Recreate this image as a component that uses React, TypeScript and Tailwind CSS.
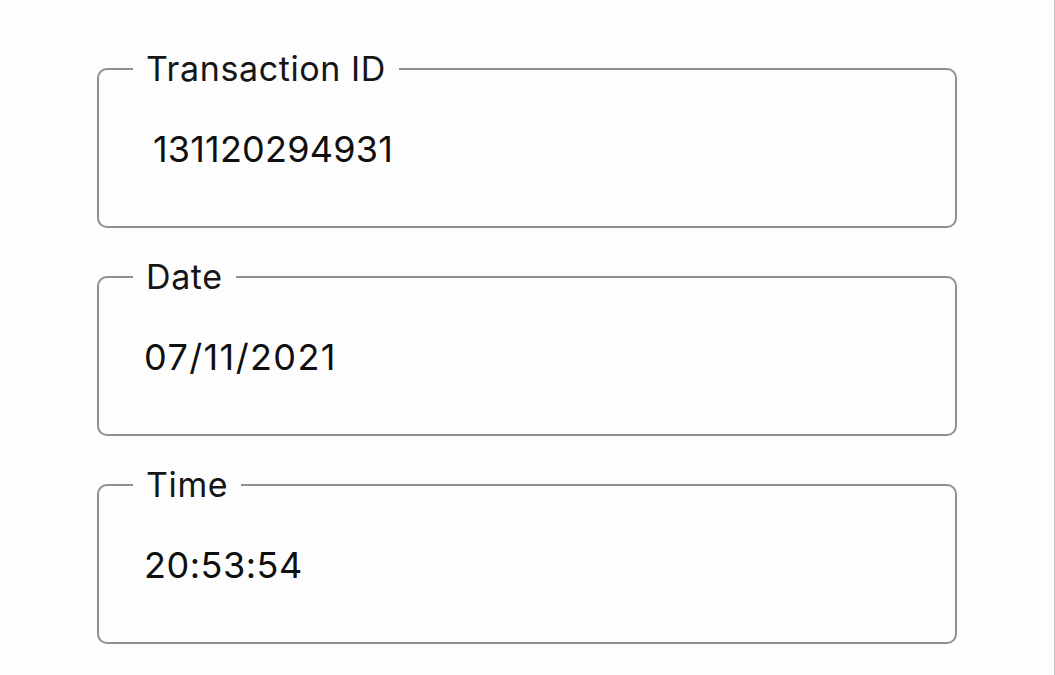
import React from "react";

const fields = [
  { label: "Transaction ID", value: "131120294931", indent: "pl-[54px]", track: "tracking-[0.2px]" },
  { label: "Date", value: "07/11/2021", indent: "pl-[45px]", track: "tracking-[1.4px]" },
  { label: "Time", value: "20:53:54", indent: "pl-[45px]", track: "tracking-[0.5px]" },
];

export default function App() {
  return (
    <div
      className="w-[1055px] h-[675px] bg-[#fdfdfd] flex"
      style={{ fontFamily: "Inter, 'Noto Sans', sans-serif" }}
    >
      <div className="w-[1054px] h-full px-[97px] pt-[51px] flex flex-col gap-[31px]">
        {fields.map((f) => (
          <fieldset
            key={f.label}
            className="border-2 border-[#8f8f8f] rounded-[10px] h-[177px] px-0"
          >
            <legend className="ml-[34px] px-[13px] text-[34px] leading-[36px] text-[#161616] tracking-[0.6px]">
              {f.label}
            </legend>
            <div className={`${f.indent} ${f.track} pt-[42px] text-[36px] leading-[40px] text-[#0f0f0f]`}>
              {f.value}
            </div>
          </fieldset>
        ))}
      </div>
      <div className="w-[1px] h-full bg-[#c4c4c4]" />
    </div>
  );
}
